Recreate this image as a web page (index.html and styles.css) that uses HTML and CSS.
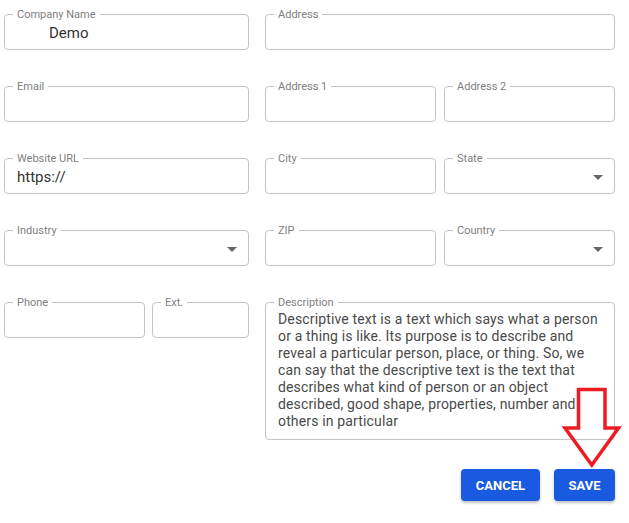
FILE: index.html
```html
<!DOCTYPE html>
<html>
<head>
<meta charset="utf-8">
<link rel="stylesheet" href="styles.css">
</head>
<body>
<div class="page">
  <form class="form">
    <div class="col-left">
      <div class="field"><span class="label">Company Name</span><span class="value indent">Demo</span></div>
      <div class="field"><span class="label">Email</span></div>
      <div class="field"><span class="label">Website URL</span><span class="value">https://</span></div>
      <div class="field select"><span class="label">Industry</span><span class="caret"></span></div>
      <div class="pair-phone">
        <div class="field"><span class="label">Phone</span></div>
        <div class="field"><span class="label">Ext.</span></div>
      </div>
    </div>
    <div class="col-right">
      <div class="field"><span class="label">Address</span></div>
      <div class="pair">
        <div class="field"><span class="label">Address 1</span></div>
        <div class="field"><span class="label">Address 2</span></div>
      </div>
      <div class="pair">
        <div class="field"><span class="label">City</span></div>
        <div class="field select"><span class="label">State</span><span class="caret"></span></div>
      </div>
      <div class="pair">
        <div class="field"><span class="label">ZIP</span></div>
        <div class="field select"><span class="label">Country</span><span class="caret"></span></div>
      </div>
      <div class="field area"><span class="label">Description</span><p class="text">Descriptive text is a text which says what a person or a thing is like. Its purpose is to describe and reveal a particular person, place, or thing. So, we can say that the descriptive text is the text that describes what kind of person or an object described, good shape, properties, number and others in particular</p></div>
    </div>
  </form>
  <div class="actions">
    <button class="btn" type="button">Cancel</button>
    <button class="btn" type="button">Save</button>
  </div>
  <svg class="arrow" width="629" height="523" viewBox="0 0 629 523">
    <path d="M578.5 389.5 L605 389.5 L605 428 L618.5 428 L591.8 465 L565 428 L578.5 428 Z" fill="none" stroke="#ed1c24" stroke-width="3.5" stroke-linejoin="miter"/>
  </svg>
</div>
</body>
</html>
```
FILE: styles.css
```css
* { box-sizing: border-box; }
html, body { margin: 0; padding: 0; background: #fff; }
body { font-family: Roboto, "Noto Sans", Arial, sans-serif; color: #333; }
.page { position: relative; width: 629px; height: 523px; padding: 14px 14px 0 4px; }
.form { display: flex; gap: 16px; }
.col-left { width: 245px; display: flex; flex-direction: column; gap: 36px; }
.col-right { width: 350px; display: flex; flex-direction: column; gap: 36px; }
.pair { display: flex; gap: 8px; }
.pair .field { flex: 1; }
.pair-phone { display: flex; gap: 7px; }
.pair-phone .field:first-child { width: 141px; }
.pair-phone .field:last-child { width: 97px; }
.field { position: relative; height: 36px; border: 1px solid #c4c4c4; border-radius: 4px; display: flex; align-items: center; padding: 0 12px; }
.label { position: absolute; top: -6px; left: 8px; padding: 0 4px; background: #fff; font-size: 11px; line-height: 11px; color: #808080; }
.value { font-size: 15px; color: #333; padding-top: 1px; }
.value.indent { padding-left: 32px; }
.caret { position: absolute; right: 11px; top: 16px; width: 0; height: 0; border-left: 5px solid transparent; border-right: 5px solid transparent; border-top: 5px solid #666; }
.field.area { height: 138px; align-items: flex-start; padding: 8px 12px 0 12px; }
.text { margin: 0; font-size: 14px; letter-spacing: 0.15px; line-height: 17px; color: #4a4a4a; }
.actions { display: flex; justify-content: flex-end; gap: 14px; margin-top: 29px; }
.btn { height: 32px; border: 0; border-radius: 4px; background: #1a5ae0; color: #fff; font-family: Roboto, Arial, sans-serif; font-weight: 700; font-size: 13px; text-transform: uppercase; padding: 0 14px; box-shadow: 0 2px 3px rgba(0,0,0,0.25); }
.btn:first-child { width: 79px; }
.btn:last-child { width: 61px; }
.arrow { position: absolute; left: 0; top: 0; pointer-events: none; }
```
